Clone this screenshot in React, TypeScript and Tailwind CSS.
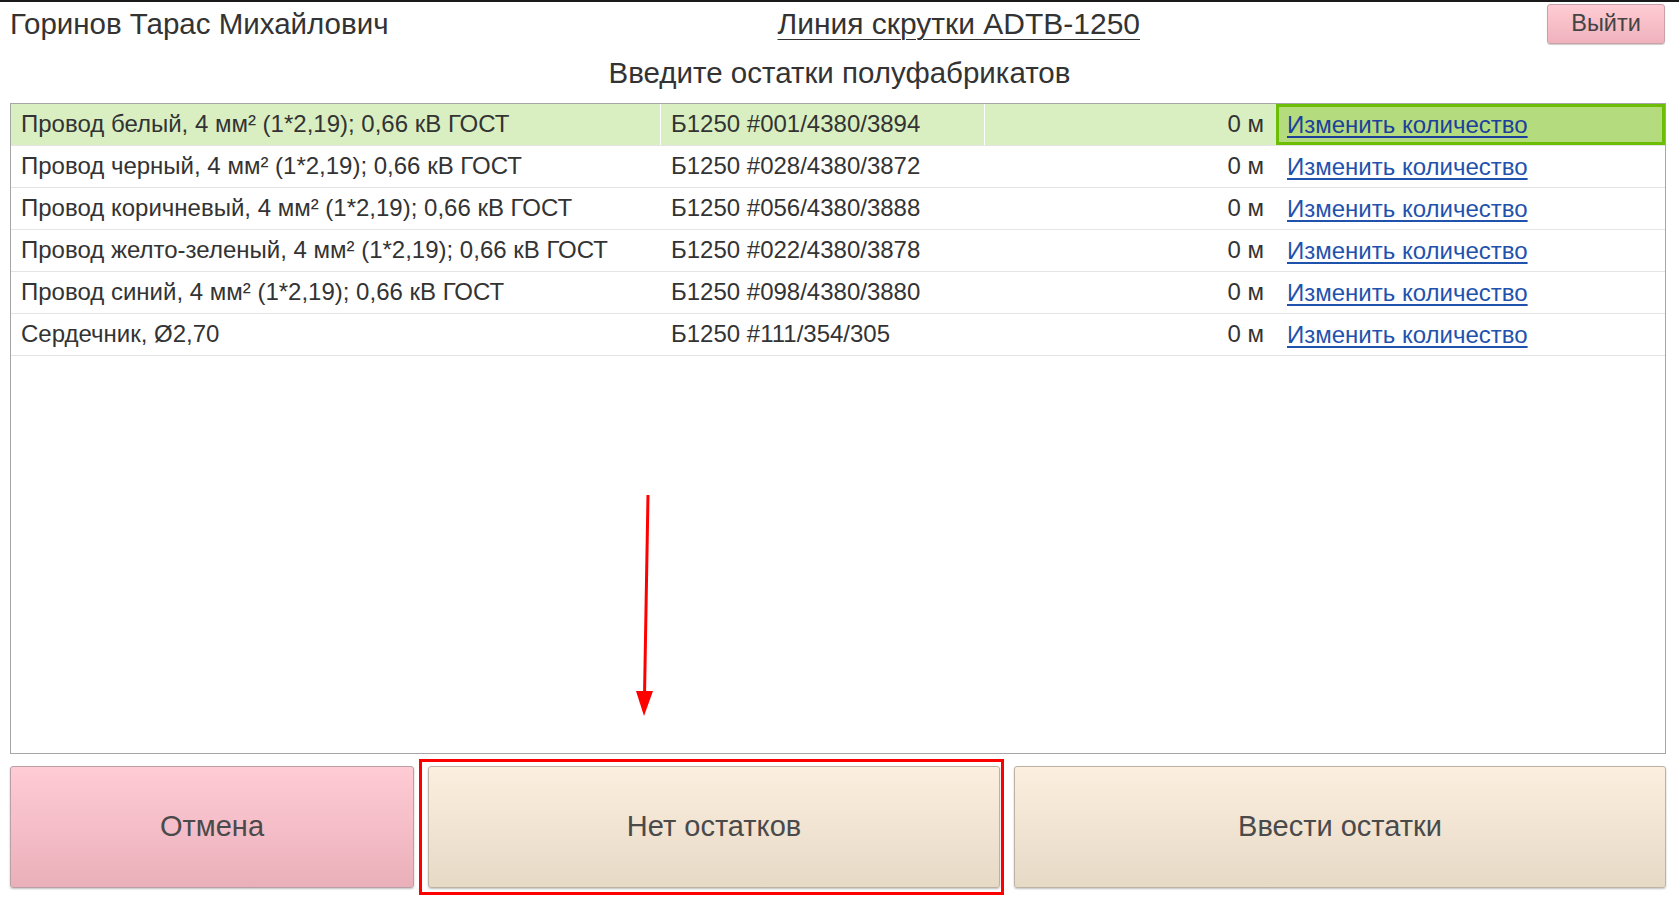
import React from 'react';

const rows = [
  { name: 'Провод белый, 4 мм² (1*2,19); 0,66 кВ ГОСТ', code: 'Б1250 #001/4380/3894', qty: '0 м' },
  { name: 'Провод черный, 4 мм² (1*2,19); 0,66 кВ ГОСТ', code: 'Б1250 #028/4380/3872', qty: '0 м' },
  { name: 'Провод коричневый, 4 мм² (1*2,19); 0,66 кВ ГОСТ', code: 'Б1250 #056/4380/3888', qty: '0 м' },
  { name: 'Провод желто-зеленый, 4 мм² (1*2,19); 0,66 кВ ГОСТ', code: 'Б1250 #022/4380/3878', qty: '0 м' },
  { name: 'Провод синий, 4 мм² (1*2,19); 0,66 кВ ГОСТ', code: 'Б1250 #098/4380/3880', qty: '0 м' },
  { name: 'Сердечник, Ø2,70', code: 'Б1250 #111/354/305', qty: '0 м' },
];

export default function App() {
  return (
    <div className="relative w-[1679px] h-[900px] bg-white border-t-2 border-[#1a1a1a] font-['Liberation_Sans',Arial,sans-serif] text-[#333]">
      {/* Header */}
      <div className="flex items-start h-[46px]">
        <div className="pl-[10px] pt-[4px] text-[29.5px] leading-[36px] text-[#333]">Горинов Тарас Михайлович</div>
        <div className="flex-1 text-center pt-[4px] pr-[18px] text-[30px] leading-[36px] underline underline-offset-[5px] decoration-1 text-[#333]">
          Линия скрутки ADTB-1250
        </div>
        <div className="pt-[2px] pr-[14px]">
          <button className="w-[118px] h-[40px] rounded-[3px] border border-[#c9a1a8] bg-gradient-to-b from-[#ffccd4] to-[#efb2bd] text-[23.5px] text-[#444] shadow-[0_1px_1px_rgba(0,0,0,0.2)]">
            Выйти
          </button>
        </div>
      </div>

      <div className="text-center text-[29.5px] leading-[36px] pt-[7px] pb-[12px] text-[#333]">Введите остатки полуфабрикатов</div>

      {/* Table */}
      <div className="ml-[10px] mr-[13px] h-[651px] border border-[#a6a6a6]">
        {rows.map((r, i) => {
          const sel = i === 0;
          return (
            <div
              key={i}
              className={`flex h-[42px] border-b border-[#e4e4e4] text-[24px] ${sel ? 'bg-[#d9efc2]' : 'bg-white'}`}
            >
              <div className="w-[650px] flex items-center pl-[10px] pb-[1px] border-r border-white">{r.name}</div>
              <div className="w-[324px] flex items-center pl-[10px] pb-[1px] border-r border-white">{r.code}</div>
              <div className="w-[291px] flex items-center justify-end pr-[12px] pb-[1px]">{r.qty}</div>
              <div
                className={`flex-1 flex items-center pl-[8px] ${sel ? 'bg-[#b4dc7e] border-[3px] border-[#6cbd05]' : 'border-[3px] border-transparent'}`}
              >
                <span className={`underline underline-offset-[3px] decoration-2 ${sel ? 'text-[#1c3f9c]' : 'text-[#1f52ad]'}`}>
                  Изменить количество
                </span>
              </div>
            </div>
          );
        })}
      </div>

      {/* Buttons */}
      <div className="flex gap-[14px] pl-[10px] pr-[13px] pt-[12px]">
        <button className="w-[404px] h-[122px] rounded-[3px] border border-[#b9a0a4] bg-gradient-to-b from-[#ffcbd5] to-[#eab0ba] text-[29px] text-[#4a4a4a] shadow-[0_1px_2px_rgba(0,0,0,0.25)]">
          Отмена
        </button>
        <button className="w-[572px] h-[122px] rounded-[3px] border border-[#bdb3a4] bg-gradient-to-b from-[#fcefdf] to-[#e6d9c6] text-[29px] text-[#4a4a4a] shadow-[0_1px_2px_rgba(0,0,0,0.25)]">
          Нет остатков
        </button>
        <button className="flex-1 h-[122px] rounded-[3px] border border-[#bdb3a4] bg-gradient-to-b from-[#fcefdf] to-[#e6d9c6] text-[29px] text-[#4a4a4a] shadow-[0_1px_2px_rgba(0,0,0,0.25)]">
          Ввести остатки
        </button>
      </div>

      {/* Annotation: highlight box */}
      <div className="absolute left-[419px] top-[757px] w-[585px] h-[136px] border-[3px] border-[#ff0000] pointer-events-none" />

      {/* Annotation: arrow */}
      <svg className="absolute left-[630px] top-[490px] pointer-events-none" width="40" height="226" viewBox="0 0 40 226">
        <line x1="18" y1="3" x2="14.5" y2="204" stroke="#ff0000" strokeWidth="3" />
        <polygon points="6,199 23,199 14,224" fill="#ff0000" />
      </svg>
    </div>
  );
}
